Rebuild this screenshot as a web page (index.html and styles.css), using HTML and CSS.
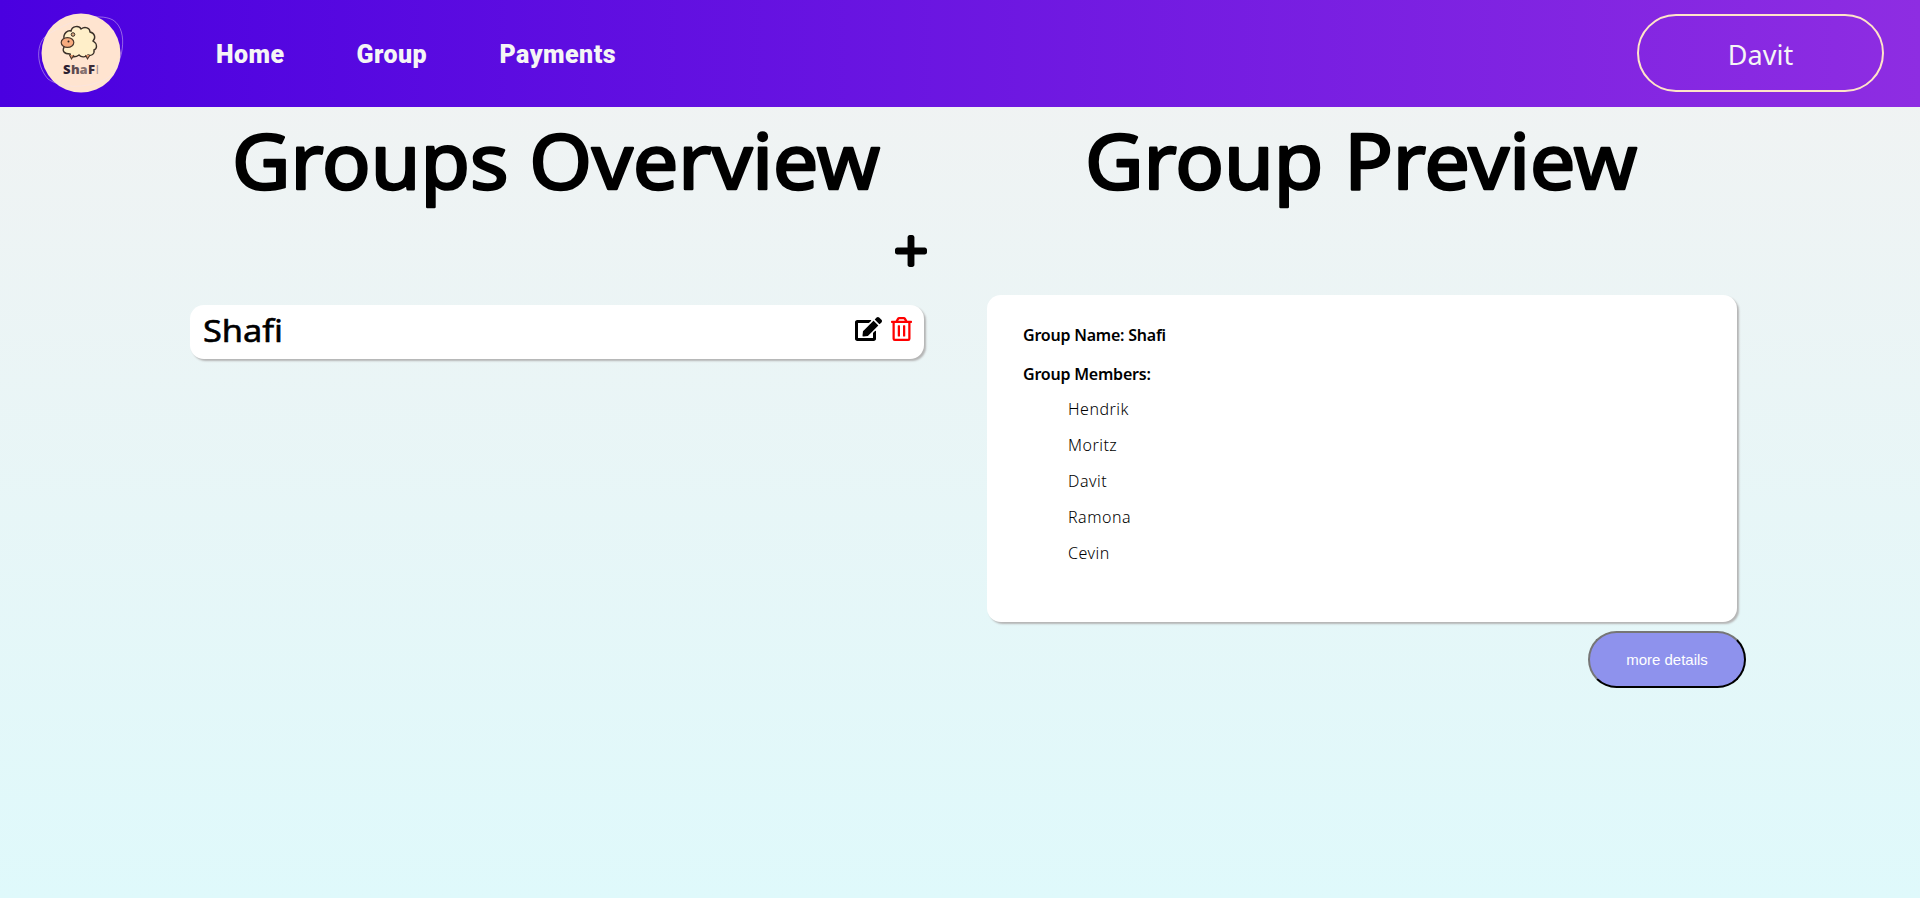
FILE: index.html
```
<!DOCTYPE html>
<html lang="en">
<head>
<meta charset="utf-8">
<title>ShaFi</title>
<link rel="stylesheet" href="styles.css">
</head>
<body>
<header class="navbar">
  <svg class="logo" viewBox="0 0 90 84" aria-label="ShaFi">
    <circle cx="45" cy="42" r="39.5" fill="#ffe4d0"/>
    <path d="M12 68C-2 52 0 27 16 21C34 10 62 1 77 9C94 20 86 55 73 66C54 78 26 78 12 68Z" fill="none" stroke="#f4e4f0" stroke-opacity=".55" stroke-width=".8"/>
    <path d="M28 28C27 22 32 19 35 20C36 15 43 14 45 18C49 15 54 17 54 21C59 22 60 27 57 30C62 33 61 38 58 39C59 44 54 45 52 44C49 47 45 46 43 44C39 47 34 46 34 43C28 43 26 40 28 36Z" fill="#ffefc9" stroke="#3b3029" stroke-width="1.4"/>
    <path d="M33.500 44l2 4L38 44M49.500 44l2 4L54 44" fill="#e79a70" stroke="#4a372c" stroke-width="1.100"/>
    <ellipse cx="31.500" cy="31.500" rx="6.300" ry="4.900" fill="#f7ab7e" stroke="#4a372c" stroke-width="1.200"/>
    <circle cx="37" cy="23.500" r="1.800" fill="#d9a87e" stroke="#3b3029"/>
    <circle cx="32.500" cy="30.500" r="1" fill="#2b211c"/>
    <g class="logo-text">
      <text x="27" y="62.500" fill="#2c2030">S</text><text x="35" y="62.500" fill="#5d4b50">h</text><text x="43.500" y="62.500" fill="#85716f">a</text><text x="52" y="62.500" fill="#3a2c38">F</text><text x="59.500" y="62.500" fill="#a08f90" class="thin">I</text>
    </g>
  </svg>
  <nav class="links">
    <a class="home">Home</a><a class="group">Group</a><a class="payments">Payments</a>
  </nav>
  <div class="user">Davit</div>
</header>
<main class="content">
  <section class="overview">
    <h1 class="title"><svg class="title-art" viewBox="0 0 648 90"><text x="-2" y="71" textLength="648" lengthAdjust="spacingAndGlyphs">Groups Overview</text></svg></h1>
    <div class="add"><svg viewBox="0 32 448 448"><path d="M416 208H272V64c0-17.670-14.330-32-32-32h-32c-17.670 0-32 14.330-32 32v144H32c-17.670 0-32 14.330-32 32v32c0 17.670 14.330 32 32 32h144v144c0 17.670 14.330 32 32 32h32c17.670 0 32-14.330 32-32V304h144c17.670 0 32-14.330 32-32v-32c0-17.670-14.330-32-32-32z"/></svg></div>
    <div class="card row">
      <svg class="row-name" viewBox="0 0 84 54"><text x="1" y="37" textLength="80" lengthAdjust="spacingAndGlyphs">Shafi</text></svg>
      <div class="actions">
        <svg class="edit" viewBox="0 0 576 512"><path d="M402.600 83.200l90.200 90.200c3.800 3.800 3.800 10 0 13.800L274.400 405.600l-92.800 10.300c-12.400 1.400-22.900-9.100-21.500-21.500l10.300-92.800L388.800 83.200c3.800-3.800 10-3.800 13.800 0zm162-22.900l-48.800-48.800c-15.200-15.200-39.900-15.200-55.200 0l-35.400 35.400c-3.800 3.800-3.800 10 0 13.800l90.200 90.200c3.800 3.800 10 3.800 13.800 0l35.400-35.400c15.200-15.300 15.200-40 0-55.200zM384 346.200V448H64V128h229.800c3.200 0 6.200-1.300 8.500-3.500l40-40c7.600-7.600 2.200-20.500-8.500-20.500H48C21.500 64 0 85.500 0 112v352c0 26.500 21.500 48 48 48h352c26.500 0 48-21.500 48-48V306.200c0-10.700-12.900-16-20.500-8.500l-40 40c-2.200 2.300-3.500 5.300-3.500 8.500z"/></svg>
        <svg class="trash" viewBox="0 0 448 512"><path d="M268 416h24a12 12 0 0 0 12-12V188a12 12 0 0 0-12-12h-24a12 12 0 0 0-12 12v216a12 12 0 0 0 12 12zM432 80h-82.410l-34-56.700A48 48 0 0 0 274.410 0H173.590a48 48 0 0 0-41.160 23.300L98.410 80H16A16 16 0 0 0 0 96v16a16 16 0 0 0 16 16h16v336a48 48 0 0 0 48 48h288a48 48 0 0 0 48-48V128h16a16 16 0 0 0 16-16V96a16 16 0 0 0-16-16zM171.840 50.910A6 6 0 0 1 177 48h94a6 6 0 0 1 5.150 2.910L293.610 80H154.390zM368 464H80V128h288zm-212-48h24a12 12 0 0 0 12-12V188a12 12 0 0 0-12-12h-24a12 12 0 0 0-12 12v216a12 12 0 0 0 12 12z"/></svg>
      </div>
    </div>
  </section>
  <section class="preview">
    <h1 class="title"><svg class="title-art narrow" viewBox="0 0 552 90"><text x="-2" y="71" textLength="552" lengthAdjust="spacingAndGlyphs">Group Preview</text></svg></h1>
    <div class="card details">
      <p class="label">Group Name: Shafi</p>
      <p class="label members">Group Members:</p>
      <ul class="list"><li>Hendrik</li><li>Moritz</li><li>Davit</li><li>Ramona</li><li>Cevin</li></ul>
    </div>
    <button class="more">more details</button>
  </section>
</main>
</body>
</html>
```
FILE: styles.css
```
* { box-sizing: border-box; }
body {
  margin: 0;
  height: 898px;
  overflow: hidden;
  background: linear-gradient(#f2f2f2, #dff9fb);
  font-family: "Noto Sans", sans-serif;
  color: #000;
}
.navbar {
  display: flex;
  align-items: center;
  height: 107px;
  padding: 0 36px;
  background: linear-gradient(to right, #4a00e0, #8e2de2);
}
.logo { width: 90px; height: 84px; margin-bottom: 1px; }
.logo-text { font: 800 13px "Open Sans", sans-serif; }
.logo-text .thin { font-weight: 400; }
.links {
  display: flex;
  flex: 1;
  padding: 2px 0 0 90px;
  font: 900 25px/30px Roboto, sans-serif;
  letter-spacing: 0.45px;
  color: #f5f5f5;
}
.home { width: 140.500px; }
.group { width: 143px; }
.user {
  width: 247px;
  height: 78px;
  margin-bottom: 2px;
  border: 2px solid #ffe4c8;
  border-radius: 39px;
  text-align: center;
  font-size: 27px;
  line-height: 77px;
  color: #f5f5f5;
}
.content { display: flex; gap: 61px; padding-left: 190px; }
.overview { width: 736px; }
.preview { width: 760px; }
.title { margin: 0; padding: 11px 0 0 44px; height: 101px; }
.preview .title { padding-left: 100px; }
.title-art { display: block; width: 648px; height: 90px; overflow: visible; }
.title-art.narrow { width: 552px; }
.title-art text {
  font: 400 76px "Noto Sans", sans-serif;
  stroke: #000;
  stroke-width: 2.5px;
  stroke-linejoin: round;
}
.add { display: flex; justify-content: flex-end; padding-top: 27px; height: 97px; }
.add svg { width: 32px; height: 32px; margin-right: -1px; }
.card {
  background: #fff;
  border-radius: 14px;
  box-shadow: 2px 2px 2px #b5b5b5;
}
.row {
  display: flex;
  align-items: center;
  justify-content: space-between;
  width: 734px;
  height: 54px;
  padding: 0 12px;
}
.row-name { width: 84px; height: 54px; overflow: visible; }
.row-name text {
  font: 400 31.5px "Noto Sans", sans-serif;
  stroke: #000;
  stroke-width: .6px;
  stroke-linejoin: round;
}
.actions { display: flex; gap: 9px; padding-bottom: 6px; }
.edit { width: 27px; height: 24px; }
.trash { width: 21px; height: 24px; fill: #f00; }
.details { width: 750px; height: 327px; margin-top: 87px; padding: 28px 36px; }
.label { margin: 0; font-size: 16px; font-weight: 600; line-height: 24px; letter-spacing: -0.22px; }
.members { margin-top: 15px; }
.list { list-style: none; margin: 5px 0 0; padding: 0 0 0 45px; font-size: 16px; font-weight: 300; line-height: 36px; letter-spacing: 0.5px; }
.more {
  display: block;
  width: 158px;
  height: 57px;
  margin: 9px 0 0 601px;
  border: 2px outset #000;
  border-color: #767676 #1f1f1f #1f1f1f #767676;
  border-radius: 29px;
  background: #8e92ed;
  color: #fff;
  font: 15px "Liberation Sans", sans-serif;
}
```
